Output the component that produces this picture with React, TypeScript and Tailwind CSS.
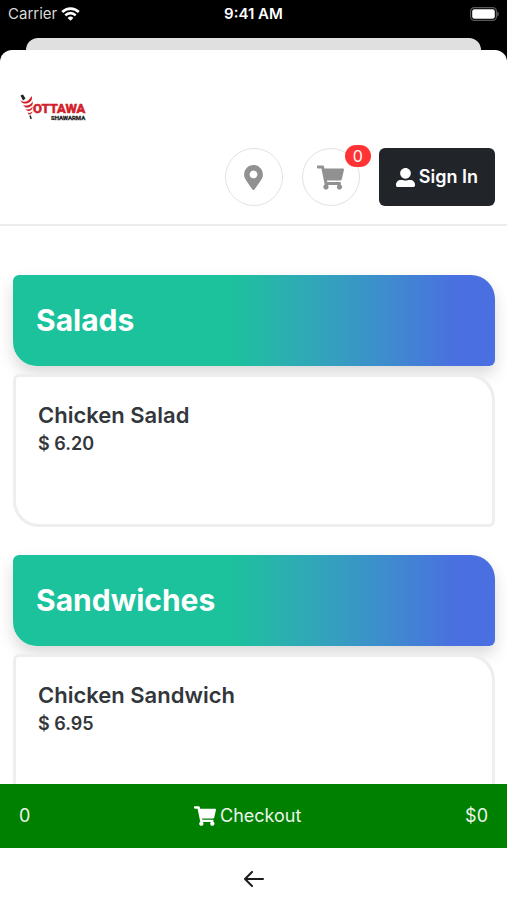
import React from 'react';
import { FaMapMarkerAlt, FaShoppingCart, FaUserAlt } from 'react-icons/fa';

interface MenuItem {
    name: string;
    price: string;
}

interface MenuSection {
    title: string;
    items: MenuItem[];
}

const sections: MenuSection[] = [
    { title: 'Salads', items: [{ name: 'Chicken Salad', price: '6.20' }] },
    { title: 'Sandwiches', items: [{ name: 'Chicken Sandwich', price: '6.95' }] },
];

const StatusBar: React.FC = () => (
    <div className="grid h-7 shrink-0 grid-cols-3 items-center px-2 text-[15px] text-white">
        <div className="flex items-center gap-1 text-[#d8d8d8]">
            <span>Carrier</span>
            <svg width="19" height="14" viewBox="0 0 19 14" fill="none" stroke="#fff" strokeWidth="2.6">
                <path d="M1.2 5a11.8 11.8 0 0 1 16.6 0" />
                <path d="M4.3 8.3a7.4 7.4 0 0 1 10.4 0" />
                <path d="M9.5 13.8 6.6 10.9a4.1 4.1 0 0 1 5.8 0z" fill="#fff" stroke="none" />
            </svg>
        </div>
        <span className="text-center font-semibold">9:41 AM</span>
        <svg className="justify-self-end" width="30" height="14" viewBox="0 0 30 14">
            <rect x="1.6" y="0.6" width="25.8" height="12.8" rx="3.6" fill="none" stroke="#5a5a5a" strokeWidth="1.2" />
            <rect x="3.2" y="2.2" width="22.6" height="9.6" rx="2.2" fill="#fff" />
            <path d="M28.2 4.6c2.2.8 2.2 4 0 4.8z" fill="#5a5a5a" />
        </svg>
    </div>
);

const Logo: React.FC = () => (
    <svg width="68" height="33" viewBox="0 0 68 33" role="img" aria-label="Ottawa Shawarma">
        <path d="M.5 5.5 3 4.5l2.500 4-2.500 2z" fill="#222" />
        <path d="M.5 10c2.500 3 8 2.500 11-4 2 4.500-2.500 8-7.500 7.500C2 13 1 12 .5 10z" fill="#d3202a" />
        <path d="M3 15c4 1.500 8 0 9.500-3.500 1.500 4-3 6.500-7 6z" fill="#d3202a" />
        <path d="M5.500 19c3 1 5.500 0 7-2.500.5 3-2.500 5-5 4.500z" fill="#d3202a" />
        <path d="M7.500 22.500c2 .8 3.500.3 5-1.200 0 2.200-2 3.500-3.800 3.200z" fill="#d3202a" />
        <path d="m10 25.500 1.200 3.500" stroke="#222" strokeWidth="1.500" />
        <text x="13" y="23" fontFamily="Roboto, sans-serif" fontSize="13" fontWeight="700" fill="#d3202a" stroke="#d3202a" strokeWidth="0.6">OTTAWA</text>
        <text x="31" y="30" fontFamily="Roboto, sans-serif" fontSize="6" fontWeight="700" fill="#222" stroke="#222" strokeWidth="0.3">SHAWARMA</text>
    </svg>
);

const Header: React.FC = () => (
    <header className="shrink-0 border-b-2 border-[#ececec] px-3 pb-[18px] pt-10">
        <a href="#" className="flex h-[58px] items-start px-2">
            <Logo />
        </a>
        <div className="flex items-center justify-end gap-[19px]">
            <button aria-label="Location" className="flex size-[58px] items-center justify-center rounded-full border border-[#e2e2e2] text-[#919191]">
                <FaMapMarkerAlt size={25} />
            </button>
            <button aria-label="Cart" className="relative flex size-[58px] items-center justify-center rounded-full border border-[#e2e2e2] text-[#919191]">
                <FaShoppingCart size={27} />
                <span className="absolute -right-3 -top-1 rounded-full bg-[#ff3334] px-2 text-base leading-[22px] text-white">0</span>
            </button>
            <button className="flex h-[58px] items-center gap-1 rounded-md bg-[#212529] px-[17px] text-lg font-semibold text-white">
                <FaUserAlt size={19} />
                Sign In
            </button>
        </div>
    </header>
);

const Section: React.FC<{ section: MenuSection }> = ({ section }) => (
    <section>
        <h2 className="rounded-bl-[24px] rounded-br-md rounded-tl-md rounded-tr-[24px] bg-linear-to-r from-[#1bc29b] from-45% to-[#496fe0] to-92% px-[23px] py-6 text-3xl leading-[43px] font-bold text-white shadow-[0_8px_16px_rgba(0,0,0,0.15)]">
            {section.title}
        </h2>
        {section.items.map(item => (
            <a
                key={item.name}
                href="#"
                className="relative mt-2 block h-[153px] rounded-bl-[26px] rounded-br-md rounded-tl-md rounded-tr-[26px] border-3 border-[#eeeeee] bg-white px-[22px] py-6 font-semibold text-[#33373b]"
            >
                <h3 className="text-[22px] leading-7">{item.name}</h3>
                <p className="text-lg leading-[30px]">$ {item.price}</p>
            </a>
        ))}
    </section>
);

const App: React.FC = () => {
    return (
        <div className="flex h-screen flex-col bg-black font-['Inter',sans-serif]">
            <StatusBar />
            <div className="mx-[26px] mt-2.5 h-3 shrink-0 rounded-t-xl bg-[#e0e0e0]" />
            <div className="flex min-h-0 flex-1 flex-col overflow-hidden rounded-t-xl bg-white">
                <Header />
                <main className="flex min-h-0 flex-1 flex-col gap-7 overflow-hidden pl-[13px] pr-3 pt-[49px]">
                    {sections.map(section => (
                        <Section key={section.title} section={section} />
                    ))}
                </main>
                <button className="flex h-16 shrink-0 items-center justify-between bg-[#008000] px-[19px] text-lg text-[#eaf5ea]">
                    <span>0</span>
                    <span className="flex items-center gap-1">
                        <FaShoppingCart size={22} className="text-white" />
                        Checkout
                    </span>
                    <span>$0</span>
                </button>
                <nav className="flex h-[52px] shrink-0 items-center justify-center pt-2.5">
                    <button aria-label="Back">
                        <svg width="20" height="16" viewBox="0 0 20 16" fill="none" stroke="#1c1c1c" strokeWidth="2" strokeLinecap="round" strokeLinejoin="round">
                            <path d="M19 8H1M8 1 1 8l7 7" />
                        </svg>
                    </button>
                </nav>
            </div>
        </div>
    );
};

export default App;
